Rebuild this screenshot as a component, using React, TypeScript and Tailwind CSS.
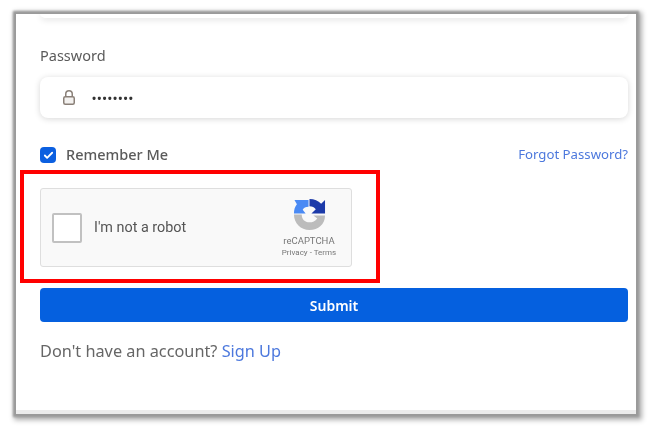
import { Check } from 'lucide-react';

function RecaptchaLogo() {
  return (
    <svg width="33" height="33" viewBox="0 0 34 34" fill="none">
      {/* grey lower arc */}
      <path d="M1 17 H9 C9 22 12 25 17 25 C20 25 23 24 25 21 L21 18 H33 C33 27 26 33 17 33 C8 33 1 26 1 17 Z" fill="#bcbcbc" />
      {/* light blue arrow */}
      <path d="M1 16 C1 12 2 9 4 6.5 L1.5 2 L16 2 V9 C13 9 11 10 10 12 L13 16 H1 Z" fill="#4a8af4" />
      {/* dark blue arrow */}
      <path d="M17 1 C22 1 26 3 29 6 L33 2 V16 H19 L23.5 11.5 C22 9.5 20 8.5 17 8.5 Z" fill="#1c3aa9" />
    </svg>
  );
}

function PadLock() {
  return (
    <svg width="12" height="15" viewBox="0 0 12 15" fill="none" stroke="#8a8078" strokeWidth="1.5">
      <rect x="0.75" y="6.75" width="10.5" height="7.5" rx="1.5" fill="#f3f1ef" />
      <path d="M2.75 6.5 V4 C2.75 2 4 0.75 6 0.75 C8 0.75 9.25 2 9.25 4 V6.5" />
    </svg>
  );
}

export default function App() {
  return (
    <div className="w-[652px] h-[428px] bg-white pl-[16px] pt-[14px] font-['Noto_Sans','Open_Sans',sans-serif] overflow-hidden blur-[0.5px]">
      <div className="w-[620px] h-[400px] bg-white pl-[24px] pr-[8px] shadow-[0_0_2px_3px_#9a9a9a,2px_2px_5px_4px_#b0b0b0] border-b-[4px] border-[#ececec] overflow-hidden">
        {/* bottom of the field above, cut off by the crop */}
        <div className="h-[5px] -mt-[1px] rounded-b-lg bg-white shadow-[0_2px_6px_rgba(0,0,0,0.12)]" />

        <label className="block mt-[27px] h-[20px] text-[14.5px] leading-[20px] text-[#5a5a5a]">Password</label>

        <div className="mt-[12px] h-[41px] flex items-center rounded-lg bg-white shadow-[0_1px_6px_rgba(0,0,0,0.16)]">
          <span className="ml-[23px] flex"><PadLock /></span>
          <span className="ml-[17px] text-[11px] font-bold tracking-[1.1px] text-[#333] leading-none">••••••••</span>
        </div>

        <div className="mt-[29px] h-[16px] flex items-center justify-between">
          <div className="flex items-center">
            <span className="w-[16px] h-[16px] rounded-[4px] bg-[#0b5fe0] flex items-center justify-center">
              <Check className="w-[11px] h-[11px] text-white" strokeWidth={4} />
            </span>
            <span className="ml-[10px] text-[14.5px] font-medium text-[#5a5a5a]">Remember Me</span>
          </div>
          <a className="text-[13.2px] text-[#4c78dd]">Forgot Password?</a>
        </div>

        <div className="mt-[7px] -ml-[20px] w-[360px] h-[113px] border-[4px] border-[#ff0000] pt-[14px] pl-[16px]">
          <div className="w-[312px] h-[79px] flex items-center rounded-[3px] border border-[#dedede] bg-[#f9f9f9] pl-[11px]">
            <span className="w-[30px] h-[30px] rounded-[2px] border-2 border-[#c1c1c1] bg-white" />
            <span className="ml-[12px] text-[14.4px] text-[#555] font-['Roboto',sans-serif]">I'm not a robot</span>
            <div className="ml-auto mr-[12px] w-[60px] flex flex-col items-center font-['Roboto',sans-serif] text-[#777]">
              <RecaptchaLogo />
              <span className="mt-[4px] text-[9.5px] leading-[12px]">reCAPTCHA</span>
              <span className="text-[8px] leading-[11px]">Privacy - Terms</span>
            </div>
          </div>
        </div>

        <button className="mt-[5px] w-full h-[34px] rounded-[4px] bg-[#0560df] text-white text-[14px] font-semibold">Submit</button>

        <p className="mt-[17px] text-[16.3px] leading-[24px] text-[#666]">
          Don't have an account? <a className="text-[#4c78dd]">Sign Up</a>
        </p>
      </div>
    </div>
  );
}
